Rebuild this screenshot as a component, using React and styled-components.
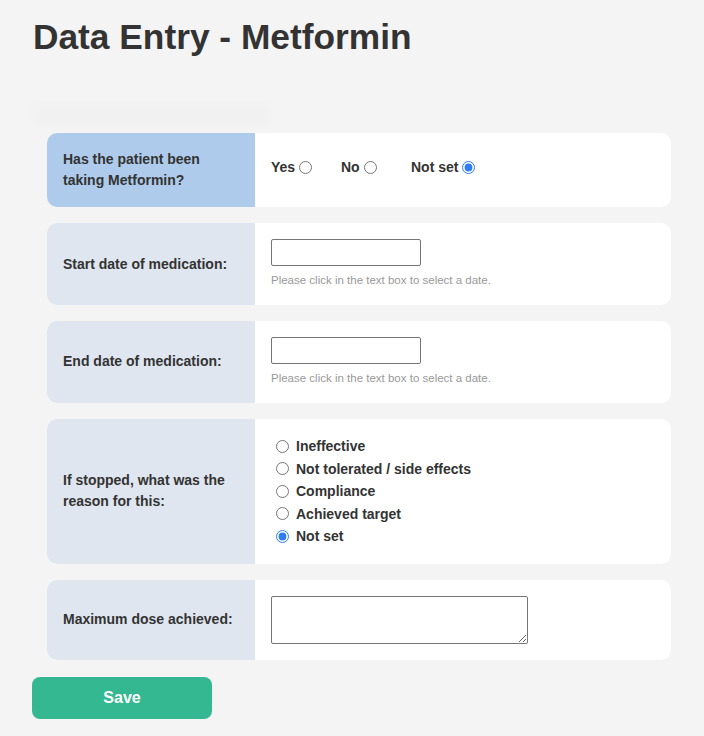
import React from 'react';
import styled, {createGlobalStyle} from "styled-components";

const GlobalStyle = createGlobalStyle`
  html, body {
    margin: 0;
    padding: 0;
    background: #f4f4f4;
    font-family: "Liberation Sans", Arial, Helvetica, sans-serif;
    color: #333;
  }
`

const Page = styled.div`
  padding: 0 32px 18px 32px;
`

const Title = styled.h1`
  margin: 0;
  padding: 15px 0 0 1px;
  font-size: 35.3px;
  line-height: 44px;
  font-weight: bold;
  color: #333;
`

const Ghost = styled.div`
  margin: 46px 0 8px 3px;
  width: 233px;
  height: 20px;
  background: #f1f1f1;
  filter: blur(2px);
`

const Form = styled.div`
  display: flex;
  flex-direction: column;
  gap: 16.3px;
  margin: 0 1px 0 15px;
`

const Card = styled.div`
  display: flex;
  background: #fff;
  border-radius: 10px;
  overflow: hidden;
`

const Label = styled.div`
  width: 208px;
  flex-shrink: 0;
  box-sizing: border-box;
  padding: 16px;
  display: flex;
  align-items: center;
  background: ${props => props.$active ? '#aecbeb' : '#dfe6ef'};
  font-size: 14px;
  font-weight: bold;
  line-height: 21px;
`

const Field = styled.div`
  flex: 1;
  padding: 16px;
  display: flex;
  flex-direction: column;
  justify-content: center;

  input[type="radio"] {
    accent-color: #2f7cf6;
  }
`

const InlineRadios = styled.div`
  display: flex;
  padding-bottom: 6px;
`

const InlineOption = styled.label`
  width: 70px;
  display: flex;
  align-items: center;
  font-size: 14px;
  font-weight: bold;
  white-space: nowrap;

  input {
    margin: 0 0 0 4px;
    width: 13px;
    height: 13px;
  }
`

const DateInput = styled.input`
  width: 150px;
  height: 27px;
  box-sizing: border-box;
  border: 1px solid #767676;
  border-radius: 2px;
  margin: 0;
`

const Hint = styled.div`
  margin-top: 6px;
  font-size: 11.5px;
  line-height: 16.6px;
  color: #999;
`

const RadioList = styled.div`
  display: flex;
  flex-direction: column;
`

const ListOption = styled.label`
  display: flex;
  align-items: center;
  height: 22.5px;
  font-size: 14px;
  font-weight: bold;

  input {
    margin: 0 7px 0 5px;
    width: 13px;
    height: 13px;
  }
`

const TextArea = styled.textarea`
  width: 257px;
  height: 48px;
  box-sizing: border-box;
  border: 1px solid #767676;
  border-radius: 2px;
  margin: 0;
`

const SaveButton = styled.button`
  margin-top: 17px;
  width: 180px;
  height: 42px;
  border: none;
  border-radius: 8px;
  background: #33b891;
  color: #fff;
  font-family: inherit;
  font-size: 16px;
  font-weight: bold;
`

const reasons = ['Ineffective', 'Not tolerated / side effects', 'Compliance', 'Achieved target', 'Not set']

const App = () => {
    return (
        <Page>
            <GlobalStyle/>
            <Title>Data Entry - Metformin</Title>
            <Ghost/>
            <Form>
                <Card>
                    <Label $active>Has the patient been taking Metformin?</Label>
                    <Field>
                        <InlineRadios>
                            <InlineOption>Yes <input type="radio" name="taking"/></InlineOption>
                            <InlineOption>No <input type="radio" name="taking"/></InlineOption>
                            <InlineOption>Not set <input type="radio" name="taking" defaultChecked/></InlineOption>
                        </InlineRadios>
                    </Field>
                </Card>
                <Card>
                    <Label>Start date of medication:</Label>
                    <Field>
                        <DateInput type="text"/>
                        <Hint>Please click in the text box to select a date.</Hint>
                    </Field>
                </Card>
                <Card>
                    <Label>End date of medication:</Label>
                    <Field>
                        <DateInput type="text"/>
                        <Hint>Please click in the text box to select a date.</Hint>
                    </Field>
                </Card>
                <Card>
                    <Label>If stopped, what was the reason for this:</Label>
                    <Field>
                        <RadioList>
                            {reasons.map(r => (
                                <ListOption key={r}>
                                    <input type="radio" name="reason" defaultChecked={r === 'Not set'}/>
                                    {r}
                                </ListOption>
                            ))}
                        </RadioList>
                    </Field>
                </Card>
                <Card>
                    <Label>Maximum dose achieved:</Label>
                    <Field>
                        <TextArea/>
                    </Field>
                </Card>
            </Form>
            <SaveButton>Save</SaveButton>
        </Page>
    )
}

export default App
